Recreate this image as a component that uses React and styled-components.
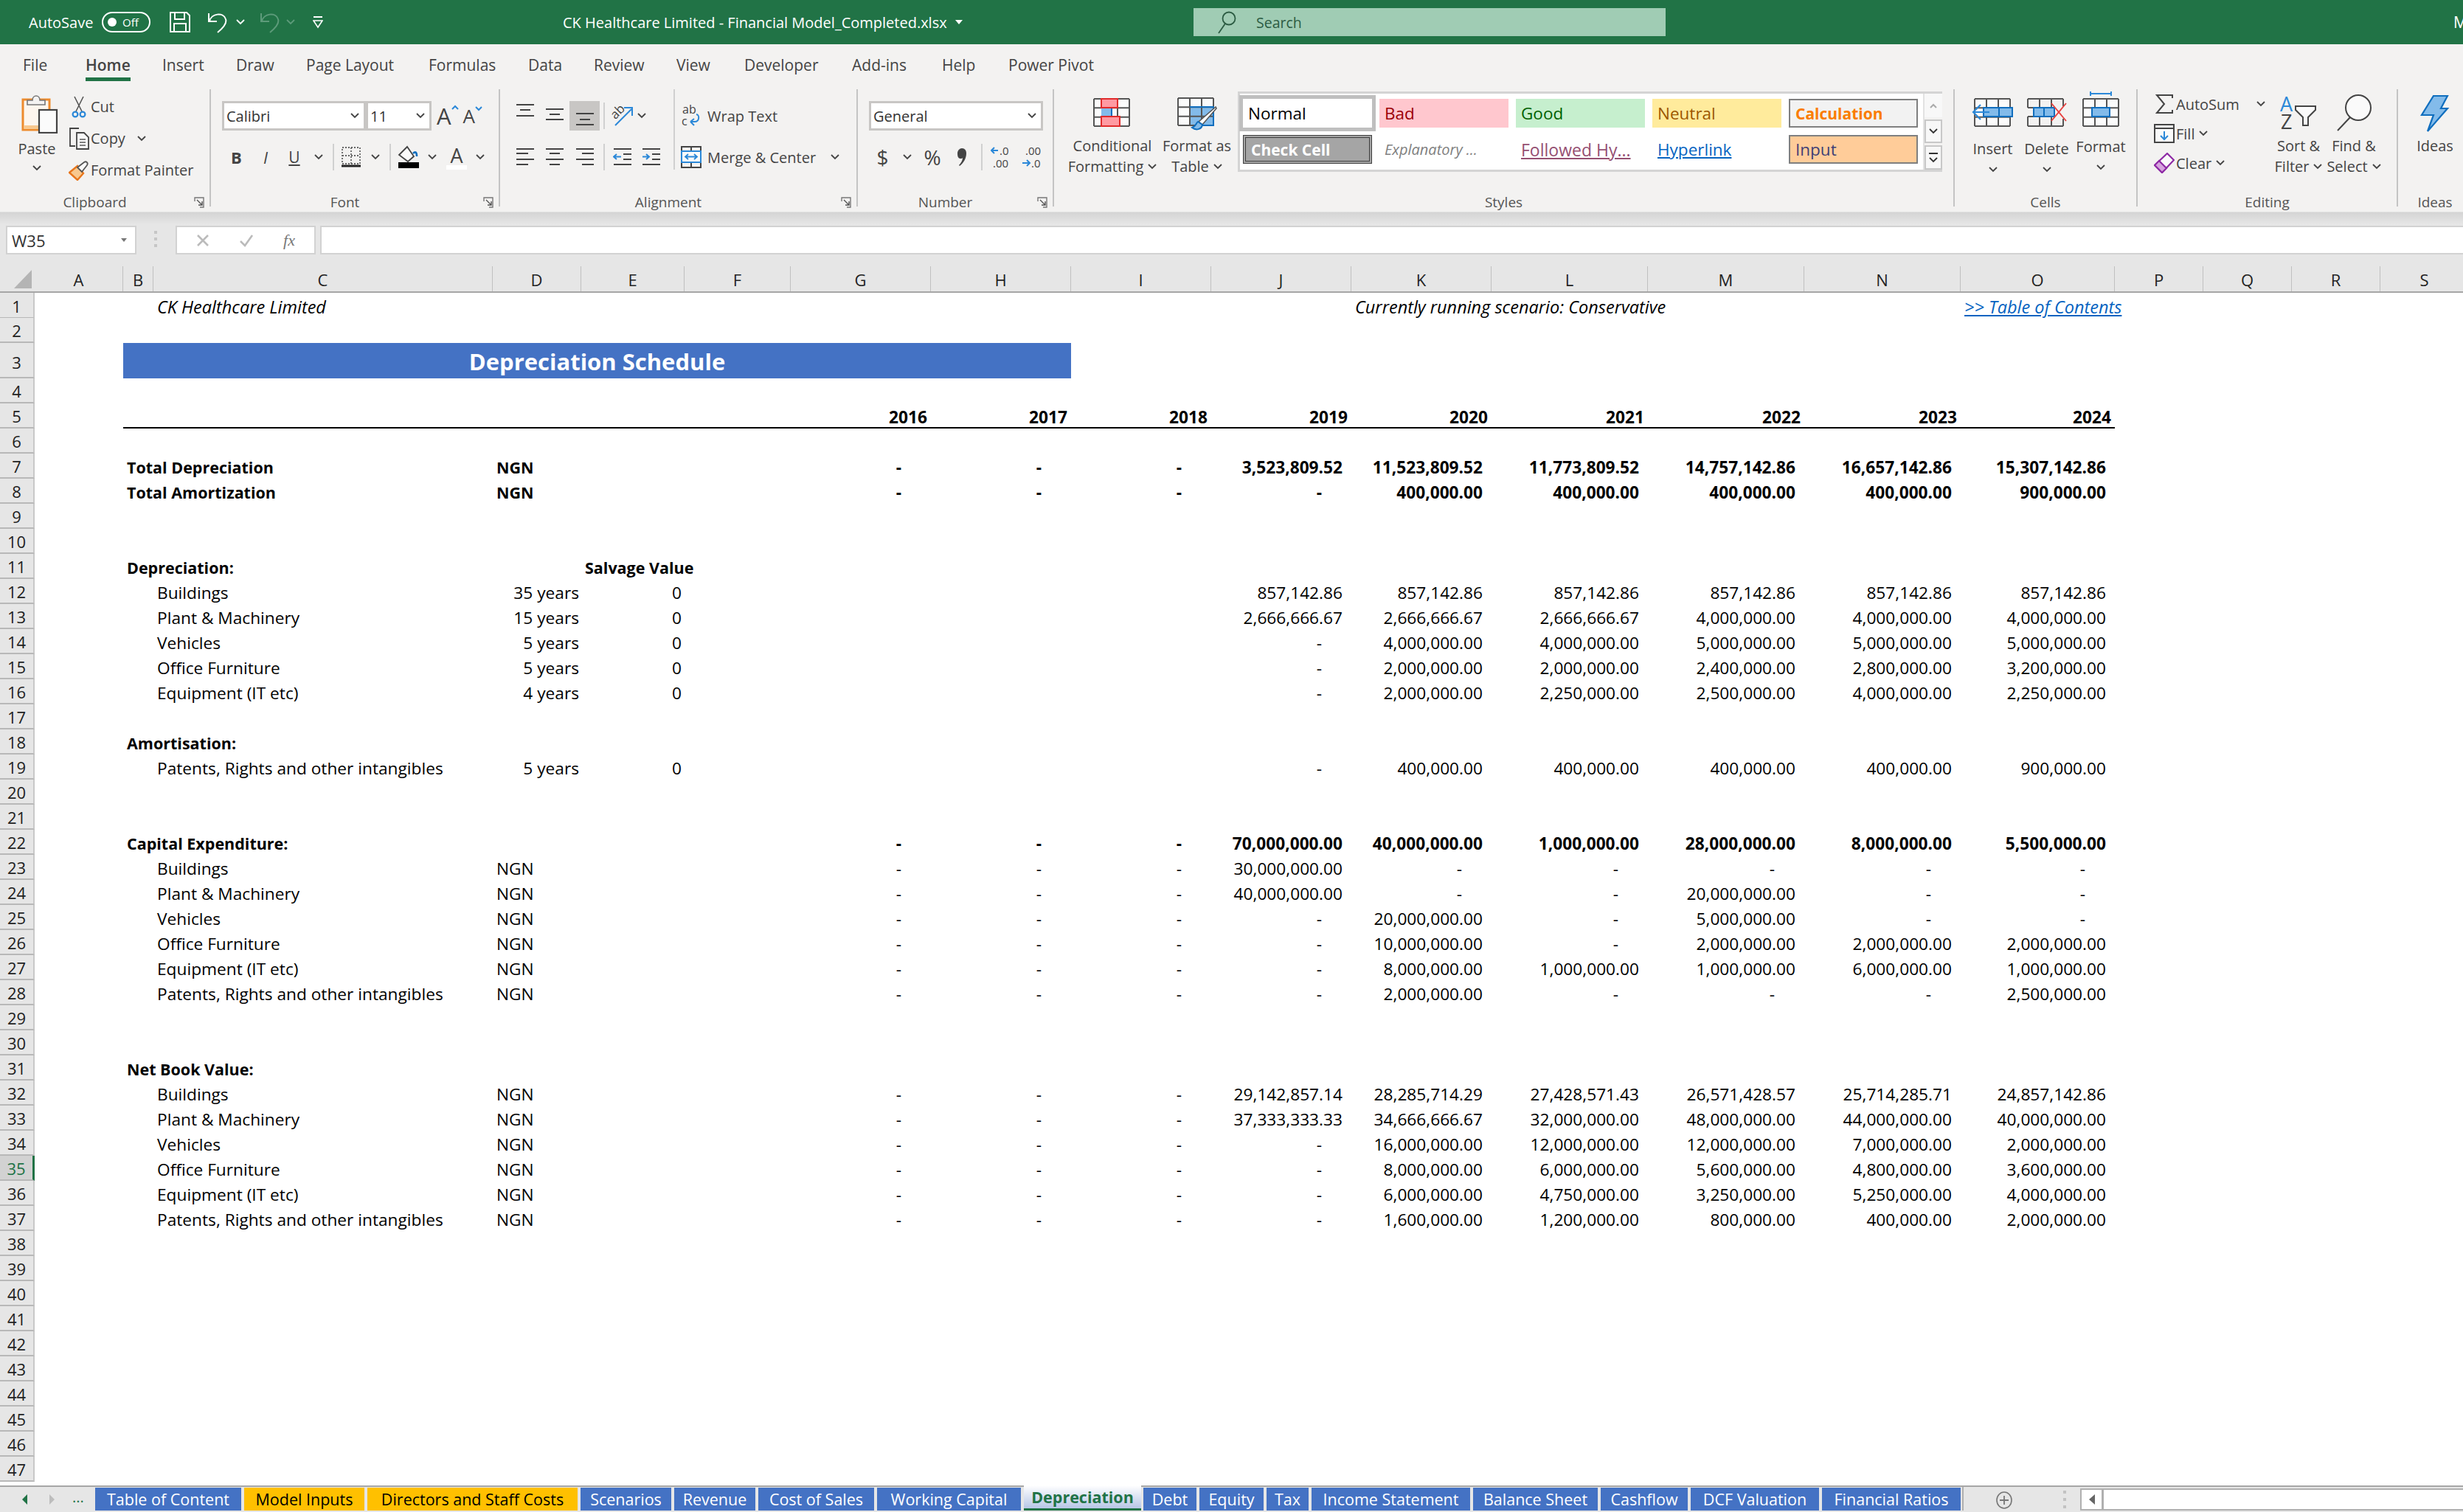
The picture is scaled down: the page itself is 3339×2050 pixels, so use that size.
import React from 'react';
import styled, { createGlobalStyle } from 'styled-components';

const Global = createGlobalStyle`
  html, body { margin: 0; padding: 0; width: 3339px; height: 2050px; overflow: hidden; background: #fff; }
  #root { width: 3339px; height: 2050px; }
  svg { display: block; flex: none; }
`;

const COL_W = [120, 41, 460, 120, 140, 144, 190, 190, 190, 190, 190, 212, 212, 212, 209, 120, 120, 120, 120];
const COL_NAMES = 'ABCDEFGHIJKLMNOPQRS'.split('');
const GRID = `47px ${COL_W.map((w) => w + 'px').join(' ')}`;
const UI = `"Open Sans", "Noto Sans", sans-serif`;

const Page = styled.div`
  width: 3339px; height: 2050px; display: flex; flex-direction: column; overflow: hidden;
  font-family: ${UI}; color: #444;
`;

/* ---------- title bar ---------- */
const TitleBar = styled.header`
  height: 60px; flex: none; background: #217346; display: flex; align-items: center; color: #fff; font-size: 19px;
`;
const QuickAccess = styled.div`
  width: 763px; flex: none; display: flex; align-items: center; padding-left: 39px; box-sizing: border-box;
`;
const AutoSave = styled.span`width: 99px; flex: none; font-size: 20px;`;
const Toggle = styled.span`
  width: 66px; height: 28px; box-sizing: border-box; border: 2px solid #fff; border-radius: 14px; display: flex; align-items: center;
  padding-left: 6px; gap: 8px; font-size: 15px; flex: none;
  &::before { content: ''; width: 12px; height: 12px; background: #fff; border-radius: 50%; }
`;
const QBtn = styled.span`margin-left: ${(p) => p.$ml}px; flex: none; display: flex;`;
const DocTitle = styled.div`width: 855px; flex: none; display: flex; align-items: center; gap: 10px; font-size: 20px; white-space: nowrap;`;
const SearchBox = styled.div`
  width: 640px; height: 38px; flex: none; background: #a0ccb4; display: flex; align-items: center; padding-left: 32px; box-sizing: border-box;
  gap: 27px; color: #2c5c43; font-size: 19.5px;
`;
const UserInitial = styled.span`margin-left: auto; margin-right: -6px; font-size: 21px;`;

/* ---------- ribbon tabs ---------- */
const TabBar = styled.nav`height: 58px; flex: none; background: #f3f2f1; display: flex; padding-left: 31px;`;
const RTab = styled.div`width: ${(p) => p.$w}px; flex: none; font-size: 21px; color: #444;`;
const RTabLabel = styled.span`
  display: inline-block; margin-top: 15px; line-height: 26px; padding-bottom: 4px; white-space: nowrap;
  border-bottom: 5px solid ${(p) => (p.$on ? '#217346' : 'transparent')};
  font-weight: ${(p) => (p.$on ? 600 : 400)};
`;

/* ---------- ribbon ---------- */
const Ribbon = styled.section`height: 169px; flex: none; background: #f3f2f1; display: flex; padding-top: 3px; box-sizing: border-box;`;
const Group = styled.div`
  width: ${(p) => p.$w}px; height: 159px; flex: none; box-sizing: border-box; display: flex; flex-direction: column;
  border-right: ${(p) => (p.$last ? 0 : '2px solid #c4c4c4')};
  padding-left: ${(p) => p.$pl || 0}px;
`;
const GroupBody = styled.div`height: 143px; flex: none; display: flex;`;
const LabelRow = styled.div`height: 16px; flex: none; display: flex; align-items: center; margin-left: ${(p) => -(p.$pull || 0)}px;`;
const GroupLabel = styled.span`flex: 1; text-align: center; font-size: 19px; line-height: 18px; color: #555; margin-top: 3px;`;
const Launcher = styled.span`width: 27px; flex: none; display: flex; justify-content: center; margin-top: 4px;`;
const Stack = styled.div`
  display: flex; flex-direction: column; width: ${(p) => (p.$w ? p.$w + 'px' : 'auto')}; flex: none;
  padding-top: ${(p) => p.$pt || 0}px; box-sizing: border-box;
`;
const ToolRow = styled.div`display: flex; align-items: center; height: ${(p) => p.$h || 40}px; margin-bottom: ${(p) => p.$mb || 0}px; flex: none;`;
const Slot = styled.span`
  width: ${(p) => p.$w}px; height: 40px; flex: none; display: flex; align-items: center; justify-content: center;
  background: ${(p) => (p.$on ? '#c8c6c4' : 'transparent')}; color: #444; font-size: ${(p) => p.$fs || 20}px;
  font-weight: ${(p) => p.$fw || 400}; font-style: ${(p) => p.$it ? 'italic' : 'normal'};
  text-decoration: ${(p) => p.$un ? 'underline' : 'none'};
`;
const VLine = styled.span`width: 2px; height: ${(p) => p.$h || 36}px; background: #d0d0d0; flex: none; margin: 0 ${(p) => p.$m ?? 5}px;`;
const Combo = styled.div`
  width: ${(p) => p.$w}px; height: 40px; box-sizing: border-box; flex: none; border: 3px solid #c8c6c4; background: #fff;
  display: flex; align-items: center; justify-content: space-between; padding: 0 6px 0 3px; font-size: 20px; color: #333;
`;
const BigBtn = styled.div`
  width: ${(p) => p.$w}px; flex: none; display: flex; flex-direction: column; align-items: center;
  font-size: 20px; color: #444; line-height: 28px; white-space: nowrap;
`;
const BigIcon = styled.div`
  height: ${(p) => p.$h || 63}px; box-sizing: border-box; display: flex; align-items: flex-end; justify-content: center; flex: none;
  padding-bottom: ${(p) => p.$pb || 0}px;
`;
const BigLine = styled.div`display: flex; align-items: center; justify-content: center; gap: 6px; height: 28px; flex: none;`;
const PasteCol = styled(BigBtn)`padding-top: 6px; box-sizing: border-box; margin-right: -10px;`;
const PasteImg = styled.div`margin-left: 8px; margin-bottom: 7px; flex: none;`;
const PasteChev = styled.div`margin-top: 8px; flex: none;`;
const MiniRow = styled.div`
  display: flex; align-items: center; height: ${(p) => p.$h || 43}px; font-size: 20px; color: #444; white-space: nowrap; flex: none;
`;
const MiniIcon = styled.span`width: ${(p) => p.$w || 33}px; flex: none; display: flex; justify-content: center;`;
const MiniChev = styled.span`margin-left: ${(p) => p.$ml}px; flex: none; display: flex;`;
const AText = styled.span`font-size: ${(p) => p.$fs}px; line-height: 1; color: #444; font-weight: 400;`;
const GrowBtn = styled.span`display: flex; align-items: flex-start; flex: none; margin-left: ${(p) => p.$ml}px;`;
const FontColor = styled.span`display: flex; flex-direction: column; align-items: center; flex: none;`;
const ColorBar = styled.span`width: 28px; height: 6px; background: #fff; flex: none;`;

/* styles gallery */
const Gallery = styled.div`
  width: 955px; height: 109px; margin-top: 3px; flex: none; box-sizing: border-box; border: 3px solid #d4d4d4; background: #fff; display: flex;
`;
const StyleGrid = styled.div`
  width: 926px; flex: none; display: grid; grid-template-columns: repeat(5, 175px); grid-auto-rows: 39px; column-gap: 10px; row-gap: 10px;
  padding: 7px 0 0 4px; box-sizing: border-box;
`;
const StyleCell = styled.div`
  box-sizing: border-box; display: flex; align-items: center; padding-left: 7px; font-size: ${(p) => p.$fs || 22.5}px; white-space: nowrap; overflow: hidden;
  background: ${(p) => p.$bg || 'transparent'}; color: ${(p) => p.$fg || '#000'}; font-weight: ${(p) => p.$b ? 700 : 400};
  font-style: ${(p) => p.$i ? 'italic' : 'normal'}; text-decoration: ${(p) => p.$u ? 'underline' : 'none'};
  border: ${(p) => p.$bd || '0'};
  box-shadow: ${(p) => p.$sel ? '0 0 0 5px #bfbfbf' : 'none'};
`;
const ScrollCol = styled.div`
  width: 24px; flex: none; display: flex; flex-direction: column; gap: 3px; border-left: 2px solid #e2e2e2; background: #f3f2f1;
`;
const ScrollCell = styled.div`
  height: ${(p) => p.$h}px; flex: none; box-sizing: border-box; display: flex; align-items: center; justify-content: center;
  border: ${(p) => p.$b ? '2px solid #c8c8c8' : '0'}; background: #f8f8f8;
`;

/* ---------- formula bar ---------- */
const FormulaBar = styled.div`
  height: 58px; flex: none; display: flex; align-items: flex-end; box-sizing: border-box; padding-left: 8px;
  background: linear-gradient(#d4d4d4 0, #e6e6e6 16px); border-top: 1px solid #e0e0e0;
`;
const NameBox = styled.div`
  width: 177px; height: 39px; flex: none; box-sizing: border-box; background: #fff; border: 2px solid #d2d2d2; display: flex; align-items: center;
  justify-content: space-between; padding: 0 10px 0 6px; font-size: 22px; color: #333;
`;
const Handle = styled.span`
  width: 4px; height: 24px; margin: 0 25px 8px 24px; flex: none;
  background: repeating-linear-gradient(#c6c6c6 0 4px, transparent 4px 9px);
`;
const FxBox = styled.div`
  width: 190px; height: 39px; flex: none; box-sizing: border-box; background: #fff; border: 2px solid #d2d2d2; display: flex; align-items: center;
  justify-content: space-around; padding: 0 6px; color: #a8a8a8;
`;
const FxText = styled.span`font-family: "Liberation Serif", serif; font-style: italic; font-size: 22px; color: #777;`;
const FormulaInput = styled.div`flex: 1; height: 39px; margin-left: 6px; box-sizing: border-box; background: #fff; border: 2px solid #d2d2d2; border-right: 0;`;

/* ---------- sheet ---------- */
const HeadRow = styled.div`
  height: 52px; flex: none; box-sizing: border-box; background: #e6e6e6; border-bottom: 2px solid #a6a6a6; display: grid;
  grid-template-columns: ${GRID}; align-items: end;
`;
const Corner = styled.div`height: 34px; display: flex; justify-content: flex-end; align-items: flex-start; padding: 4px 3px 0 0; box-sizing: border-box;`;
const ColHead = styled.div`
  height: 34px; box-sizing: border-box; display: flex; align-items: center; justify-content: center; font-size: 22px; color: #222; padding-top: 2px;
  border-right: 1px solid #c0c0c0;
`;
const SheetBody = styled.div`flex: 1; min-height: 0; background: #fff; overflow: hidden;`;
const Row = styled.div`display: grid; grid-template-columns: ${GRID}; height: ${(p) => p.$h}px; position: relative;`;
const RowHead = styled.div`
  grid-column: 1; grid-row: 1; background: ${(p) => (p.$on ? '#d2d2d2' : '#e6e6e6')}; color: ${(p) => (p.$on ? '#217346' : '#222')};
  font-size: 22px; display: flex; align-items: center; justify-content: center; box-sizing: border-box; padding-top: ${(p) => p.$pt}px;
  border-bottom: 2px solid #b8b8b8; border-right: ${(p) => (p.$on ? '3px solid #217346' : '2px solid #c8c8c8')};
`;
const Cell = styled.div`
  grid-row: 1; grid-column: ${(p) => p.$col}; min-width: 0; display: flex; align-items: center; white-space: nowrap; padding-top: 3px; box-sizing: border-box;
  font-size: ${(p) => p.$fs || 22.7}px; color: ${(p) => p.$color || '#000'}; font-weight: ${(p) => (p.$b ? 700 : 400)}; font-style: ${(p) => (p.$i ? 'italic' : 'normal')};
  justify-content: ${(p) => (p.$right ? 'flex-end' : 'flex-start')};
  padding-left: ${(p) => (p.$right ? 0 : 5)}px; padding-right: ${(p) => (p.$right ? p.$pr || 0 : 0)}px;
  text-decoration: ${(p) => (p.$u ? 'underline' : 'none')};
`;
const Banner = styled.div`
  grid-row: 1; grid-column: 3 / 10; background: #4472c4; color: #fff; font-size: 31px; font-weight: 700; display: flex; align-items: center; justify-content: center;
  padding-top: 2px;
`;
const Rule = styled.div`grid-row: 1; grid-column: 3 / 17; border-bottom: 2px solid #000;`;

/* ---------- sheet tabs ---------- */
const TabsBar = styled.footer`
  height: 36px; flex: none; box-sizing: border-box; background: #e6e6e6; border-top: 2px solid #a6a6a6; display: flex; align-items: flex-start; position: relative;
`;
const NavBox = styled.div`width: 129px; height: 34px; flex: none; display: flex; align-items: center; padding-left: 30px; box-sizing: border-box; gap: 28px; color: #217346; font-size: 20px;`;
const NavDots = styled.span`margin-left: -4px; line-height: 1; margin-top: -6px;`;
const SheetTab = styled.div`
  width: ${(p) => p.$w}px; height: 31px; margin-top: 1px; margin-right: 4px; flex: none; display: flex; align-items: center; justify-content: center;
  font-size: 21.5px; white-space: nowrap; box-sizing: border-box;
  background: ${(p) => p.$bg}; color: ${(p) => p.$fg};
`;
const ActiveTab = styled.div`
  width: ${(p) => p.$w}px; height: 34px; margin-top: -2px; margin-right: 3px; flex: none; display: flex; align-items: center; justify-content: center; box-sizing: border-box;
  font-size: 21.5px; font-weight: 700; color: #217346; white-space: nowrap; border-bottom: 3px solid #217346;
  background: linear-gradient(#ffffff, #b7c6e6);
`;
const TabEnd = styled.span`width: 2px; height: 32px; background: #b0b0b0; flex: none; margin-left: -2px;`;
const AddSheet = styled.span`margin-left: 44px; margin-top: 6px; flex: none; display: flex;`;
const TabHandle = styled.span`
  width: 4px; height: 24px; flex: none; margin: 5px 19px 0 69px;
  background: repeating-linear-gradient(#c2c2c2 0 4px, transparent 4px 10px);
`;
const HScroll = styled.div`
  flex: 1; height: 30px; margin-top: 2px; box-sizing: border-box; background: #fff; border: 2px solid #b0b0b0; border-right: 0; display: flex;
`;
const HArrow = styled.span`width: 27px; flex: none; border-right: 3px solid #b0b0b0; display: flex; align-items: center; justify-content: center;`;

/* ---------- icons ---------- */
const Svg = ({ w, h, children }) => <svg width={w} height={h} viewBox={`0 0 ${w} ${h}`} fill="none">{children}</svg>;
const Chev = ({ c = '#444' }) => <Svg w={12} h={8}><polyline points="1,1 6,6 11,1" stroke={c} strokeWidth="1.8" /></Svg>;
const DARK = '#444', BLUE = '#2b88d8', DBLUE = '#106ebe', LBLUE = '#83bbea';

const LauncherIcon = () => (
  <Svg w={15} h={15}><path d="M1 6V1h12v13H8" stroke="#777" strokeWidth="1.4" /><path d="M4 4l7 7M11 6v5H6" stroke="#555" strokeWidth="1.4" /></Svg>
);
const SaveIcon = () => (
  <Svg w={28} h={28}><path d="M1 1h22l4 4v22H1z" stroke="#fff" strokeWidth="2" /><path d="M7 1v9h13V1M6 27V16h16v11" stroke="#fff" strokeWidth="2" /></Svg>
);
const UndoIcon = ({ c = '#fff' }) => (
  <Svg w={27} h={30}><path d="M3 14C5 3 22 1 25 11c2 6-6 14-11 18" stroke={c} strokeWidth="2" /><path d="M2 3v11h11" stroke={c} strokeWidth="2" /></Svg>
);
const Customize = () => (
  <Svg w={14} h={18}><path d="M1 2h12" stroke="#fff" strokeWidth="2" /><path d="M1 7h12l-6 9z" stroke="#fff" strokeWidth="1.6" /></Svg>
);
const SearchIcon = () => (
  <Svg w={26} h={32}><circle cx="16" cy="11" r="8.5" stroke="#2c5c43" strokeWidth="1.8" /><path d="M11 18L2 31" stroke="#2c5c43" strokeWidth="1.8" /></Svg>
);
const PasteIcon = () => (
  <Svg w={50} h={54}>
    <rect x="2" y="8" width="36" height="41" fill="#fdf6ee" stroke="#ed8b2d" strokeWidth="3" />
    <rect x="3.5" y="43" width="33" height="5" fill="#f8c88e" />
    <path d="M8 15v-6h7c0-8 10-8 10 0h7v6z" fill="#f3f2f1" stroke="#777" strokeWidth="1.6" />
    <rect x="24" y="22" width="24" height="31" fill="#fbfbfb" stroke="#444" strokeWidth="2.2" />
  </Svg>
);
const CutIcon = () => (
  <Svg w={20} h={30}>
    <path d="M4 1l10 20M16 1L6 21" stroke="#555" strokeWidth="1.6" />
    <circle cx="5" cy="25" r="3.4" stroke={BLUE} strokeWidth="2.2" /><circle cx="15" cy="25" r="3.4" stroke={BLUE} strokeWidth="2.2" />
  </Svg>
);
const CopyIcon = () => (
  <Svg w={28} h={30}>
    <path d="M14 1H2v24h7" stroke="#444" strokeWidth="1.8" />
    <path d="M11 7h10l6 6v16H11z" fill="#fafafa" stroke="#444" strokeWidth="1.8" />
    <path d="M15 16h8M15 20h8M15 24h8" stroke="#555" strokeWidth="1.4" />
  </Svg>
);
const PainterIcon = () => (
  <Svg w={28} h={28}>
    <path d="M1 17L12 8l8 10-8 9z" fill="#f8c88e" stroke="#e8761c" strokeWidth="2.4" />
    <path d="M12 10l9-7c3-2 6 1 4 4l-7 9z" fill="#fafafa" stroke="#555" strokeWidth="1.8" />
  </Svg>
);
const BordersIcon = () => (
  <Svg w={28} h={30}>
    <rect x="2" y="2" width="24" height="22" stroke="#666" strokeWidth="1.8" strokeDasharray="2 2" />
    <path d="M14 2v22M2 13h24" stroke="#666" strokeWidth="1.8" strokeDasharray="2 2" />
    <path d="M1 27h26" stroke="#222" strokeWidth="3" />
  </Svg>
);
const FillIcon = () => (
  <Svg w={30} h={34}>
    <path d="M2 14L13 3l9 13-8 7z" fill="#fafafa" stroke="#444" strokeWidth="1.8" />
    <path d="M21 12c3-3 5-2 5 4" stroke={DBLUE} strokeWidth="2.6" />
    <rect x="1" y="24" width="28" height="8" fill="#000" />
  </Svg>
);
const Lines = ({ h = 40, w = 26, rows }) => (
  <Svg w={w} h={h}>{rows.map(([a, b, y], i) => <path key={i} d={`M${a} ${y}H${b}`} stroke={DARK} strokeWidth="2" />)}</Svg>
);
const OrientIcon = () => (
  <Svg w={32} h={30}>
    <text x="2" y="16" transform="rotate(-45 10 12)" fontFamily="Open Sans" fontSize="17" fill="#444">ab</text>
    <path d="M7 28L29 6M19 4h11v11" stroke={BLUE} strokeWidth="2" />
  </Svg>
);
const WrapIcon = () => (
  <Svg w={26} h={32}>
    <text x="1" y="13" fontFamily="Open Sans" fontSize="16" fill="#444">ab</text>
    <text x="0" y="29" fontFamily="Open Sans" fontSize="16" fill="#444">c</text>
    <path d="M12 24h6c6 0 7-9 2-10M12 24l5-4M12 24l5 5" stroke={BLUE} strokeWidth="2" />
  </Svg>
);
const MergeIcon = () => (
  <Svg w={28} h={30}>
    <path d="M1 1h26v28H1zM14 1v7M14 22v7M1 8h26M1 22h26" stroke="#444" strokeWidth="2" />
    <rect x="1" y="7" width="26" height="15" fill="#fafafa" stroke={BLUE} strokeWidth="2" />
    <path d="M6 14.5h16M10 11l-4 3.5 4 3.5M18 11l4 3.5-4 3.5" stroke={BLUE} strokeWidth="1.8" />
  </Svg>
);
const IndentIcon = ({ out }) => (
  <Svg w={26} h={40}>
    <path d="M1 9h24M14 16h11M14 23h11M1 30h24" stroke={DARK} strokeWidth="2" />
    {out ? <path d="M1 19.5h10M5 16l-4 3.5 4 3.5" stroke={BLUE} strokeWidth="2" /> : <path d="M1 19.5h9M6 16l4 3.5-4 3.5" stroke={BLUE} strokeWidth="2" />}
  </Svg>
);
const CommaIcon = () => (
  <Svg w={14} h={26}><path d="M7 1c4 0 6 3 6 7 0 7-4 13-9 17l-1-1c3-3 5-7 5-10-1 1-2 1-3 1-3 0-4-3-4-7 0-4 3-7 6-7z" fill="#444" /></Svg>
);
const DecIcon = ({ inc }) => (
  <Svg w={30} h={34}>
    {inc ? (
      <>
        <path d="M10 8H2M5 4L1 8l4 4" stroke={BLUE} strokeWidth="2" />
        <text x="12" y="14" fontFamily="Open Sans" fontSize="15" fill="#444">.0</text>
        <text x="3" y="31" fontFamily="Open Sans" fontSize="15" fill="#444">.00</text>
      </>
    ) : (
      <>
        <text x="6" y="14" fontFamily="Open Sans" fontSize="15" fill="#444">.00</text>
        <path d="M2 25h10M8 21l4 4-4 4" stroke={BLUE} strokeWidth="2" />
        <text x="14" y="31" fontFamily="Open Sans" fontSize="15" fill="#444">.0</text>
      </>
    )}
  </Svg>
);
const TableGrid = ({ x = 1, y = 1, w = 48, h = 37, cols = 3, rows = 3 }) => {
  const d = [];
  for (let i = 0; i <= cols; i++) d.push(`M${x + (w * i) / cols} ${y}v${h}`);
  for (let j = 0; j <= rows; j++) d.push(`M${x} ${y + (h * j) / rows}h${w}`);
  return <path d={d.join('')} stroke="#555" strokeWidth="2" />;
};
const CondIcon = () => (
  <Svg w={52} h={42}>
    <rect x="1" y="1" width="48" height="37" fill="#fbfbfb" />
    <TableGrid />
    <rect x="11" y="13" width="14" height="12" fill={LBLUE} />
    <path d="M25 13v12" stroke={DBLUE} strokeWidth="2" />
    <rect x="11" y="1" width="22" height="12" fill="#ff9aa2" stroke="#e02b2b" strokeWidth="2" />
    <rect x="11" y="25" width="25" height="13" fill="#ff9aa2" stroke="#e02b2b" strokeWidth="2" />
  </Svg>
);
const FormatTableIcon = () => (
  <Svg w={54} h={48}>
    <rect x="1" y="1" width="48" height="37" fill="#fbfbfb" />
    <rect x="17" y="13" width="32" height="25" fill={LBLUE} />
    <TableGrid />
    <path d="M17 13h32v25H30" stroke={DBLUE} strokeWidth="2" />
    <path d="M52 13L29 33l5 4L53 15z" fill="#fff" stroke="#555" strokeWidth="1.6" />
    <path d="M28 33c-3 2-2 6-8 8 5 4 13 3 14-4z" fill={LBLUE} stroke={DBLUE} strokeWidth="2" />
  </Svg>
);
const InsertIcon = () => (
  <Svg w={58} h={40}>
    <rect x="4" y="1" width="48" height="37" fill="#fbfbfb" />
    <TableGrid x={4} />
    <rect x="16" y="13" width="39" height="12" fill={LBLUE} stroke={DBLUE} strokeWidth="2" />
    <path d="M37 13v12" stroke={DBLUE} strokeWidth="2" />
    <path d="M24 19H2M12 9L2 19l10 10" stroke={BLUE} strokeWidth="2.2" />
  </Svg>
);
const DeleteIcon = () => (
  <Svg w={54} h={40}>
    <path d="M1 1h48M1 13h8M1 25h8M1 38h48M1 1v12M1 25v13M17 1v12M33 1v12M17 25v13M33 25v13M49 1v10M49 28v10" stroke="#555" strokeWidth="2" />
    <rect x="9" y="13" width="28" height="12" fill={LBLUE} stroke={DBLUE} strokeWidth="2" />
    <path d="M23 13v12" stroke={DBLUE} strokeWidth="2" />
    <path d="M33 7l20 24M53 7L33 31" stroke="#e8403f" strokeWidth="1.8" />
  </Svg>
);
const FormatIcon = () => (
  <Svg w={50} h={48}>
    <path d="M11 3h28M11 0v6M39 0v6" stroke={BLUE} strokeWidth="2" />
    <rect x="1" y="10" width="48" height="37" fill="#fbfbfb" />
    <TableGrid y={10} />
    <rect x="13" y="22" width="24" height="12" fill={LBLUE} stroke={DBLUE} strokeWidth="2" />
  </Svg>
);
const SigmaIcon = () => <Svg w={24} h={26}><path d="M23 5V1H2l10 12L2 25h21v-4" stroke="#444" strokeWidth="2" /></Svg>;
const FillDown = () => (
  <Svg w={28} h={26}>
    <rect x="1" y="1" width="26" height="24" fill="#fafafa" stroke="#444" strokeWidth="2" /><path d="M1 6h26" stroke="#444" strokeWidth="2" />
    <path d="M14 10v11M9 16l5 5 5-5" stroke={BLUE} strokeWidth="2" />
  </Svg>
);
const ClearIcon = () => (
  <Svg w={28} h={28}>
    <path d="M18 1l9 9-16 17-10-10z" fill="#fafafa" stroke="#8e2aa5" strokeWidth="2.2" />
    <path d="M1 17l6-6 10 10-6 6z" fill="#d6a3de" stroke="#8e2aa5" strokeWidth="2.2" />
  </Svg>
);
const SortIcon = () => (
  <Svg w={52} h={48}>
    <text x="1" y="23" fontFamily="Open Sans" fontSize="27" fill={BLUE}>A</text>
    <text x="2" y="47" fontFamily="Open Sans" fontSize="27" fill="#444">Z</text>
    <path d="M22 16h27v5L39 31v11h-7V31L22 21z" fill="#fafafa" stroke="#444" strokeWidth="2" />
  </Svg>
);
const FindIcon = () => (
  <Svg w={52} h={52}><circle cx="32" cy="20" r="17" fill="#fafafa" stroke="#444" strokeWidth="2" /><path d="M21 33L4 51" stroke="#444" strokeWidth="2" /></Svg>
);
const IdeasIcon = () => (
  <Svg w={40} h={50}><path d="M18 1h19l-9 17h9L10 49l8-22H2z" fill={LBLUE} stroke={DBLUE} strokeWidth="2.2" /></Svg>
);
const UpCaret = ({ c }) => <Svg w={10} h={7}><polyline points="1,6 5,2 9,6" stroke={c} strokeWidth="2" /></Svg>;

/* ---------- data ---------- */
const RTABS = [['File', 85], ['Home', 104, 1], ['Insert', 100], ['Draw', 95], ['Page Layout', 166], ['Formulas', 135], ['Data', 89], ['Review', 112], ['View', 92], ['Developer', 146], ['Add-ins', 122], ['Help', 90], ['Power Pivot', 140]];
const SHEETS = [
  ['Table of Content', 198, '#4472c4', '#fff'], ['Model Inputs', 163, '#ffc000', '#000'], ['Directors and Staff Costs', 285, '#ffc000', '#000'],
  ['Scenarios', 123, '#4472c4', '#fff'], ['Revenue', 110, '#4472c4', '#fff'], ['Cost of Sales', 157, '#4472c4', '#fff'], ['Working Capital', 195, '#4472c4', '#fff'],
  ['Depreciation', 159, null, null], ['Debt', 72, '#4472c4', '#fff'], ['Equity', 87, '#4472c4', '#fff'], ['Tax', 57, '#4472c4', '#fff'],
  ['Income Statement', 215, '#4472c4', '#fff'], ['Balance Sheet', 169, '#4472c4', '#fff'], ['Cashflow', 118, '#4472c4', '#fff'], ['DCF Valuation', 174, '#4472c4', '#fff'], ['Financial Ratios', 188, '#4472c4', '#fff'],
];

const D = '-';
const YEARS = ['2016', '2017', '2018', '2019', '2020', '2021', '2022', '2023', '2024'];
const Y = '857,142.86';
const F = (s) => s + ',000,000.00';
const DATA = {
  7: { head: 'Total Depreciation', unit: 'NGN', bold: true, nums: [D, D, D, '3,523,809.52', '11,523,809.52', '11,773,809.52', '14,757,142.86', '16,657,142.86', '15,307,142.86'] },
  8: { head: 'Total Amortization', unit: 'NGN', bold: true, nums: [D, D, D, D, '400,000.00', '400,000.00', '400,000.00', '400,000.00', '900,000.00'] },
  11: { head: 'Depreciation:', bold: true, salvageHead: true },
  12: { label: 'Buildings', years: '35 years', salvage: '0', nums: [null, null, null, Y, Y, Y, Y, Y, Y] },
  13: { label: 'Plant & Machinery', years: '15 years', salvage: '0', nums: [null, null, null, '2,666,666.67', '2,666,666.67', '2,666,666.67', F('4'), F('4'), F('4')] },
  14: { label: 'Vehicles', years: '5 years', salvage: '0', nums: [null, null, null, D, F('4'), F('4'), F('5'), F('5'), F('5')] },
  15: { label: 'Office Furniture', years: '5 years', salvage: '0', nums: [null, null, null, D, F('2'), F('2'), '2,400,000.00', '2,800,000.00', '3,200,000.00'] },
  16: { label: 'Equipment (IT etc)', years: '4 years', salvage: '0', nums: [null, null, null, D, F('2'), '2,250,000.00', '2,500,000.00', F('4'), '2,250,000.00'] },
  18: { head: 'Amortisation:', bold: true },
  19: { label: 'Patents, Rights and other intangibles', years: '5 years', salvage: '0', nums: [null, null, null, D, '400,000.00', '400,000.00', '400,000.00', '400,000.00', '900,000.00'] },
  22: { head: 'Capital Expenditure:', bold: true, nums: [D, D, D, F('70'), F('40'), F('1'), F('28'), F('8'), '5,500,000.00'] },
  23: { label: 'Buildings', unit: 'NGN', nums: [D, D, D, F('30'), D, D, D, D, D] },
  24: { label: 'Plant & Machinery', unit: 'NGN', nums: [D, D, D, F('40'), D, D, F('20'), D, D] },
  25: { label: 'Vehicles', unit: 'NGN', nums: [D, D, D, D, F('20'), D, F('5'), D, D] },
  26: { label: 'Office Furniture', unit: 'NGN', nums: [D, D, D, D, F('10'), D, F('2'), F('2'), F('2')] },
  27: { label: 'Equipment (IT etc)', unit: 'NGN', nums: [D, D, D, D, F('8'), F('1'), F('1'), F('6'), F('1')] },
  28: { label: 'Patents, Rights and other intangibles', unit: 'NGN', nums: [D, D, D, D, F('2'), D, D, D, '2,500,000.00'] },
  31: { head: 'Net Book Value:', bold: true },
  32: { label: 'Buildings', unit: 'NGN', nums: [D, D, D, '29,142,857.14', '28,285,714.29', '27,428,571.43', '26,571,428.57', '25,714,285.71', '24,857,142.86'] },
  33: { label: 'Plant & Machinery', unit: 'NGN', nums: [D, D, D, '37,333,333.33', '34,666,666.67', F('32'), F('48'), F('44'), F('40')] },
  34: { label: 'Vehicles', unit: 'NGN', nums: [D, D, D, D, F('16'), F('12'), F('12'), F('7'), F('2')] },
  35: { label: 'Office Furniture', unit: 'NGN', nums: [D, D, D, D, F('8'), F('6'), '5,600,000.00', '4,800,000.00', '3,600,000.00'] },
  36: { label: 'Equipment (IT etc)', unit: 'NGN', nums: [D, D, D, D, F('6'), '4,750,000.00', '3,250,000.00', '5,250,000.00', F('4')] },
  37: { label: 'Patents, Rights and other intangibles', unit: 'NGN', nums: [D, D, D, D, '1,600,000.00', '1,200,000.00', '800,000.00', '400,000.00', F('2')] },
};
const colOf = (letter) => COL_NAMES.indexOf(letter) + 2;
const FIRST_NUM = colOf('G');
const BOLD_TXT = 21.5;
const ITALIC_TXT = 23.5;

const NumCells = ({ nums, bold }) => nums.map((v, i) => v == null ? null : (
  <Cell key={i} $col={FIRST_NUM + i} $right $pr={v === D ? 40 : 12} $b={bold}>{v}</Cell>
));

const SheetRow = ({ n }) => {
  const r = DATA[n];
  return (
    <Row $h={n === 3 ? 48 : 34}>
      <RowHead $on={n === 35} $pt={n === 3 ? 6 : 2}>{n}</RowHead>
      {n === 1 && <>
        <Cell $col={colOf('C')} $i $fs={ITALIC_TXT}>CK Healthcare Limited</Cell>
        <Cell $col={colOf('K')} $i $fs={ITALIC_TXT}>Currently running scenario: Conservative</Cell>
        <Cell $col={colOf('O')} $i $u $color="#0563c1" $fs={ITALIC_TXT}>&gt;&gt; Table of Contents</Cell>
      </>}
      {n === 3 && <Banner>Depreciation Schedule</Banner>}
      {n === 5 && <>
        <Rule />
        {YEARS.map((y, i) => <Cell key={y} $col={FIRST_NUM + i} $right $pr={5} $b>{y}</Cell>)}
      </>}
      {r && <>
        {r.head && <Cell $col={colOf('B')} $b $fs={BOLD_TXT}>{r.head}</Cell>}
        {r.label && <Cell $col={colOf('C')}>{r.label}</Cell>}
        {r.unit && <Cell $col={colOf('D')} $b={r.bold} $fs={r.bold ? BOLD_TXT : undefined}>{r.unit}</Cell>}
        {r.years && <Cell $col={colOf('D')} $right $pr={3}>{r.years}</Cell>}
        {r.salvage && <Cell $col={colOf('E')} $right $pr={4}>{r.salvage}</Cell>}
        {r.salvageHead && <Cell $col={colOf('E')} $b $fs={BOLD_TXT}>Salvage Value</Cell>}
        {r.nums && <NumCells nums={r.nums} bold={r.bold} />}
      </>}
    </Row>
  );
};

const Big = ({ w, icon, h, pb, lines, chevLast }) => (
  <BigBtn $w={w}>
    <BigIcon $h={h} $pb={pb}>{icon}</BigIcon>
    {lines.map((l, i) => (
      <BigLine key={i}>{l}{chevLast && i === lines.length - 1 && <Chev />}</BigLine>
    ))}
  </BigBtn>
);

const DlgLabel = ({ children, pull }) => (
  <LabelRow $pull={pull}><GroupLabel>{children}</GroupLabel><Launcher><LauncherIcon /></Launcher></LabelRow>
);

const StylesGallery = () => (
  <Gallery>
    <StyleGrid>
      <StyleCell $sel $bg="#fff">Normal</StyleCell>
      <StyleCell $bg="#ffc7ce" $fg="#9c0006">Bad</StyleCell>
      <StyleCell $bg="#c6efce" $fg="#006100">Good</StyleCell>
      <StyleCell $bg="#ffeb9c" $fg="#9c5700">Neutral</StyleCell>
      <StyleCell $bg="#f2f2f2" $fg="#fa7d00" $b $fs={21} $bd="2px solid #7f7f7f">Calculation</StyleCell>
      <StyleCell $bg="#a5a5a5" $fg="#fff" $b $fs={21} $bd="4px double #3f3f3f">Check Cell</StyleCell>
      <StyleCell $fg="#7f7f7f" $i $fs={20}>Explanatory ...</StyleCell>
      <StyleCell $fg="#954f72" $u $fs={23}>Followed Hy...</StyleCell>
      <StyleCell $fg="#0563c1" $u>Hyperlink</StyleCell>
      <StyleCell $bg="#ffcc99" $fg="#3f3f76" $bd="2px solid #7f7f7f">Input</StyleCell>
    </StyleGrid>
    <ScrollCol>
      <ScrollCell $h={32}><UpCaret c="#aaa" /></ScrollCell>
      <ScrollCell $h={32} $b><Chev c="#333" /></ScrollCell>
      <ScrollCell $h={33} $b>
        <Svg w={14} h={16}><path d="M1 2h12" stroke="#333" strokeWidth="2" /><polyline points="2,8 7,13 12,8" stroke="#333" strokeWidth="1.8" /></Svg>
      </ScrollCell>
    </ScrollCol>
  </Gallery>
);

export default function App() {
  const rows = Array.from({ length: 47 }, (_, i) => i + 1);
  return (
    <Page>
      <Global />
      <TitleBar>
        <QuickAccess>
          <AutoSave>AutoSave</AutoSave>
          <Toggle>Off</Toggle>
          <QBtn $ml={26}><SaveIcon /></QBtn>
          <QBtn $ml={23}><UndoIcon /></QBtn>
          <QBtn $ml={12}><Chev c="#fff" /></QBtn>
          <QBtn $ml={20}><UndoIcon c="#5d9b7a" /></QBtn>
          <QBtn $ml={9}><Chev c="#5d9b7a" /></QBtn>
          <QBtn $ml={24}><Customize /></QBtn>
        </QuickAccess>
        <DocTitle>
          CK Healthcare Limited - Financial Model_Completed.xlsx
          <Svg w={12} h={8}><path d="M1 1h10L6 7z" fill="#fff" /></Svg>
        </DocTitle>
        <SearchBox><SearchIcon />Search</SearchBox>
        <UserInitial>M</UserInitial>
      </TitleBar>

      <TabBar>
        {RTABS.map(([t, w, on]) => <RTab key={t} $w={w}><RTabLabel $on={on}>{t}</RTabLabel></RTab>)}
      </TabBar>

      <Ribbon>
        <Group $w={286}>
          <GroupBody>
            <PasteCol $w={100}>
              <PasteImg><PasteIcon /></PasteImg>
              <BigLine>Paste</BigLine>
              <PasteChev><Chev /></PasteChev>
            </PasteCol>
            <Stack $pt={2}>
              <MiniRow><MiniIcon><CutIcon /></MiniIcon>Cut</MiniRow>
              <MiniRow><MiniIcon><CopyIcon /></MiniIcon>Copy<MiniChev $ml={16}><Chev /></MiniChev></MiniRow>
              <MiniRow><MiniIcon><PainterIcon /></MiniIcon>Format Painter</MiniRow>
            </Stack>
          </GroupBody>
          <DlgLabel>Clipboard</DlgLabel>
        </Group>

        <Group $w={392} $pl={15}>
          <GroupBody>
            <Stack $pt={16}>
              <ToolRow $mb={16}>
                <Combo $w={195}>Calibri<Chev /></Combo>
                <Combo $w={89}>11<Chev /></Combo>
                <GrowBtn $ml={7}><AText $fs={31}>A</AText><UpCaret c={BLUE} /></GrowBtn>
                <GrowBtn $ml={6}><AText $fs={26}>A</AText><Svg w={10} h={7}><polyline points="1,1 5,5 9,1" stroke={BLUE} strokeWidth="2" /></Svg></GrowBtn>
              </ToolRow>
              <ToolRow>
                <Slot $w={39} $fs={22} $fw={700}>B</Slot>
                <Slot $w={40} $fs={22} $it>I</Slot>
                <Slot $w={38} $fs={21} $un>U</Slot>
                <Slot $w={28}><Chev /></Slot>
                <VLine $m={5} />
                <Slot $w={36}><BordersIcon /></Slot>
                <Slot $w={30}><Chev /></Slot>
                <VLine $m={4} />
                <Slot $w={40}><FillIcon /></Slot>
                <Slot $w={24}><Chev /></Slot>
                <Slot $w={42}>
                  <FontColor><AText $fs={27}>A</AText><ColorBar /></FontColor>
                </Slot>
                <Slot $w={22}><Chev /></Slot>
              </ToolRow>
            </Stack>
          </GroupBody>
          <DlgLabel pull={15}>Font</DlgLabel>
        </Group>

        <Group $w={485} $pl={14}>
          <GroupBody>
            <Stack $pt={16} $w={221}>
              <ToolRow $mb={16}>
                <Slot $w={40}><Lines rows={[[1, 25, 5], [6, 20, 12], [1, 25, 20]]} /></Slot>
                <Slot $w={40}><Lines rows={[[1, 25, 11], [6, 20, 18], [1, 25, 25]]} /></Slot>
                <Slot $w={41} $on><Lines rows={[[1, 25, 17], [6, 20, 25], [1, 25, 32]]} /></Slot>
                <VLine $m={5} />
                <Slot $w={36}><OrientIcon /></Slot>
                <Slot $w={18}><Chev /></Slot>
              </ToolRow>
              <ToolRow>
                <Slot $w={40}><Lines rows={[[1, 25, 9], [1, 17, 15], [1, 25, 23], [1, 17, 30]]} /></Slot>
                <Slot $w={40}><Lines rows={[[1, 25, 9], [6, 20, 15], [1, 25, 23], [6, 20, 30]]} /></Slot>
                <Slot $w={41}><Lines rows={[[1, 25, 9], [9, 25, 15], [1, 25, 23], [9, 25, 30]]} /></Slot>
                <VLine $m={5} />
                <Slot $w={38}><IndentIcon out /></Slot>
                <Slot $w={40}><IndentIcon /></Slot>
              </ToolRow>
            </Stack>
            <VLine $m={0} $h={109} />
            <Stack $pt={16}>
              <ToolRow $mb={16}>
                <MiniRow $h={40}><MiniIcon $w={44}><WrapIcon /></MiniIcon>Wrap Text</MiniRow>
              </ToolRow>
              <ToolRow>
                <MiniRow $h={40}><MiniIcon $w={44}><MergeIcon /></MiniIcon>Merge &amp; Center<MiniChev $ml={20}><Chev /></MiniChev></MiniRow>
              </ToolRow>
            </Stack>
          </GroupBody>
          <DlgLabel pull={14}>Alignment</DlgLabel>
        </Group>

        <Group $w={266} $pl={15}>
          <GroupBody>
            <Stack $pt={16}>
              <ToolRow $mb={16}><Combo $w={236}>General<Chev /></Combo></ToolRow>
              <ToolRow>
                <Slot $w={37} $fs={28}>$</Slot>
                <Slot $w={30}><Chev /></Slot>
                <Slot $w={38} $fs={28}>%</Slot>
                <Slot $w={42}><CommaIcon /></Slot>
                <VLine $m={5} />
                <Slot $w={42}><DecIcon inc /></Slot>
                <Slot $w={40}><DecIcon /></Slot>
              </ToolRow>
            </Stack>
          </GroupBody>
          <DlgLabel pull={15}>Number</DlgLabel>
        </Group>

        <Group $w={1221} $pl={20}>
          <GroupBody>
            <Big w={118} icon={<CondIcon />} h={63} pb={9} lines={['Conditional', 'Formatting']} chevLast />
            <Big w={111} icon={<FormatTableIcon />} h={63} pb={4} lines={['Format as', 'Table']} chevLast />
            <StylesGallery />
          </GroupBody>
          <LabelRow $pull={20}><GroupLabel>Styles</GroupLabel></LabelRow>
        </Group>

        <Group $w={248} $pl={15}>
          <GroupBody>
            <Big w={73} icon={<InsertIcon />} h={67} pb={15} lines={['Insert', <Chev key="c" />]} />
            <Big w={73} icon={<DeleteIcon />} h={67} pb={15} lines={['Delete', <Chev key="c" />]} />
            <Big w={74} icon={<FormatIcon />} h={64} pb={13} lines={['Format', <Chev key="c" />]} />
          </GroupBody>
          <LabelRow $pull={15}><GroupLabel>Cells</GroupLabel></LabelRow>
        </Group>

        <Group $w={353} $pl={20}>
          <GroupBody>
            <Stack $w={164}>
              <MiniRow $h={40}><MiniIcon $w={32}><SigmaIcon /></MiniIcon>AutoSum<MiniChev $ml={23}><Chev /></MiniChev></MiniRow>
              <MiniRow $h={40}><MiniIcon $w={32}><FillDown /></MiniIcon>Fill<MiniChev $ml={6}><Chev /></MiniChev></MiniRow>
              <MiniRow $h={40}><MiniIcon $w={32}><ClearIcon /></MiniIcon>Clear<MiniChev $ml={6}><Chev /></MiniChev></MiniRow>
            </Stack>
            <Big w={68} icon={<SortIcon />} h={63} pb={8} lines={['Sort &', 'Filter']} chevLast />
            <Big w={82} icon={<FindIcon />} h={63} pb={6} lines={['Find &', 'Select']} chevLast />
          </GroupBody>
          <LabelRow $pull={20}><GroupLabel>Editing</GroupLabel></LabelRow>
        </Group>

        <Group $w={88} $pl={12} $last>
          <GroupBody>
            <Big w={76} icon={<IdeasIcon />} h={63} pb={5} lines={['Ideas']} />
          </GroupBody>
          <LabelRow><GroupLabel>Ideas</GroupLabel></LabelRow>
        </Group>
      </Ribbon>

      <FormulaBar>
        <NameBox>W35<Svg w={10} h={7}><path d="M1 1h8L5 6z" fill="#777" /></Svg></NameBox>
        <Handle />
        <FxBox>
          <Svg w={18} h={18}><path d="M2 2l14 14M16 2L2 16" stroke="#bbb" strokeWidth="2.6" /></Svg>
          <Svg w={20} h={18}><path d="M2 10l6 6L18 2" stroke="#bbb" strokeWidth="2.6" /></Svg>
          <FxText>fx</FxText>
        </FxBox>
        <FormulaInput />
      </FormulaBar>

      <HeadRow>
        <Corner><Svg w={26} h={26}><path d="M25 1v25H1z" fill="#b4b4b4" /></Svg></Corner>
        {COL_NAMES.map((c) => <ColHead key={c}>{c}</ColHead>)}
      </HeadRow>

      <SheetBody>
        {rows.map((n) => <SheetRow key={n} n={n} />)}
      </SheetBody>

      <TabsBar>
        <NavBox>
          <Svg w={8} h={14}><path d="M7 0v14L0 7z" fill="#217346" /></Svg>
          <Svg w={8} h={14}><path d="M1 0v14l7-7z" fill="#bdbdbd" /></Svg>
          <NavDots>...</NavDots>
        </NavBox>
        {SHEETS.map(([t, w, bg, fg]) => bg
          ? <SheetTab key={t} $w={w} $bg={bg} $fg={fg}>{t}</SheetTab>
          : <ActiveTab key={t} $w={w}>{t}</ActiveTab>)}
        <TabEnd />
        <AddSheet>
          <Svg w={22} h={24}><ellipse cx="11" cy="12" rx="10" ry="11" stroke="#777" strokeWidth="1.6" /><path d="M11 6v12M5 12h12" stroke="#777" strokeWidth="1.8" /></Svg>
        </AddSheet>
        <TabHandle />
        <HScroll><HArrow><Svg w={8} h={14}><path d="M8 0v14L0 7z" fill="#666" /></Svg></HArrow></HScroll>
      </TabsBar>
    </Page>
  );
}
